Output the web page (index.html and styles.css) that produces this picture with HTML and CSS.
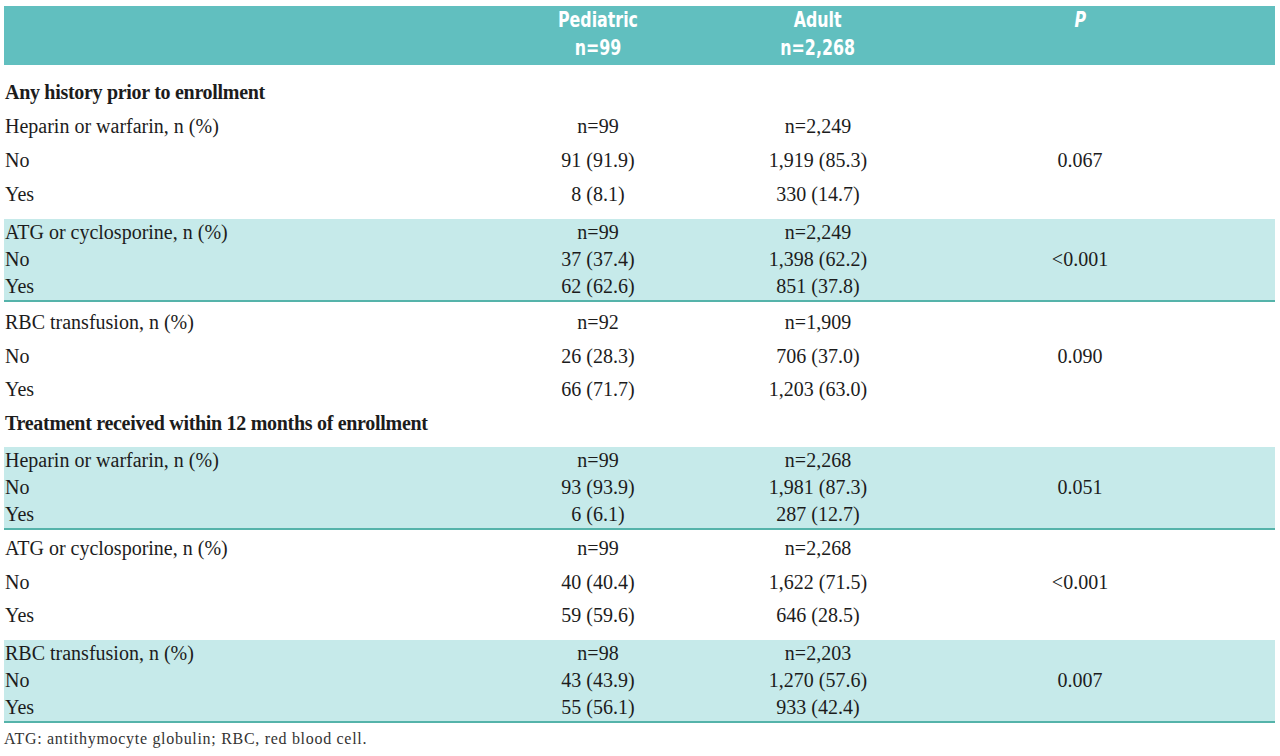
FILE: index.html
```html
<!DOCTYPE html>
<html lang="en">
<head>
<meta charset="utf-8">
<title>Treatment history table</title>
<link rel="stylesheet" href="styles.css">
</head>
<body>
<table class="tbl">
  <colgroup>
    <col class="c-label">
    <col class="c-ped">
    <col class="c-adult">
    <col class="c-p">
  </colgroup>
  <thead>
    <tr>
      <th></th>
      <th><span class="hd">Pediatric<br>n=99</span></th>
      <th><span class="hd">Adult<br>n=2,268</span></th>
      <th><span class="hd"><i>P</i></span></th>
    </tr>
  </thead>
  <tbody class="plain g1">
    <tr class="sec"><td colspan="4">Any history prior to enrollment</td></tr>
    <tr><td>Heparin or warfarin, n (%)</td><td>n=99</td><td>n=2,249</td><td></td></tr>
    <tr><td>No</td><td>91 (91.9)</td><td>1,919 (85.3)</td><td>0.067</td></tr>
    <tr><td>Yes</td><td>8 (8.1)</td><td>330 (14.7)</td><td></td></tr>
  </tbody>
  <tbody class="band">
    <tr><td>ATG or cyclosporine, n (%)</td><td>n=99</td><td>n=2,249</td><td></td></tr>
    <tr><td>No</td><td>37 (37.4)</td><td>1,398 (62.2)</td><td>&lt;0.001</td></tr>
    <tr><td>Yes</td><td>62 (62.6)</td><td>851 (37.8)</td><td></td></tr>
  </tbody>
  <tbody class="plain g2">
    <tr><td>RBC transfusion, n (%)</td><td>n=92</td><td>n=1,909</td><td></td></tr>
    <tr><td>No</td><td>26 (28.3)</td><td>706 (37.0)</td><td>0.090</td></tr>
    <tr><td>Yes</td><td>66 (71.7)</td><td>1,203 (63.0)</td><td></td></tr>
    <tr class="sec"><td colspan="4">Treatment received within 12 months of enrollment</td></tr>
  </tbody>
  <tbody class="band">
    <tr><td>Heparin or warfarin, n (%)</td><td>n=99</td><td>n=2,268</td><td></td></tr>
    <tr><td>No</td><td>93 (93.9)</td><td>1,981 (87.3)</td><td>0.051</td></tr>
    <tr><td>Yes</td><td>6 (6.1)</td><td>287 (12.7)</td><td></td></tr>
  </tbody>
  <tbody class="plain g3">
    <tr><td>ATG or cyclosporine, n (%)</td><td>n=99</td><td>n=2,268</td><td></td></tr>
    <tr><td>No</td><td>40 (40.4)</td><td>1,622 (71.5)</td><td>&lt;0.001</td></tr>
    <tr><td>Yes</td><td>59 (59.6)</td><td>646 (28.5)</td><td></td></tr>
  </tbody>
  <tbody class="band">
    <tr><td>RBC transfusion, n (%)</td><td>n=98</td><td>n=2,203</td><td></td></tr>
    <tr><td>No</td><td>43 (43.9)</td><td>1,270 (57.6)</td><td>0.007</td></tr>
    <tr><td>Yes</td><td>55 (56.1)</td><td>933 (42.4)</td><td></td></tr>
  </tbody>
</table>
<p class="note">ATG: antithymocyte globulin; RBC, red blood cell.</p>
</body>
</html>
```
FILE: styles.css
```css
html, body {
  margin: 0;
  padding: 0;
  background: #ffffff;
}

body {
  font-family: "Liberation Serif", "Times New Roman", serif;
  color: #1c1c1c;
}

.tbl {
  margin: 6px 0 0 4px;
  width: 1271px;
  border-collapse: separate;
  border-spacing: 0;
  table-layout: fixed;
  font-size: 20px;
}

.c-label { width: 441px; }
.c-ped { width: 306px; }
.c-adult { width: 134px; }
.c-p { width: 390px; }

.tbl th {
  background: #61bfbf;
  color: #ffffff;
  height: 59px;
  padding: 0;
  vertical-align: top;
  text-align: center;
  font-family: "DejaVu Sans Condensed", "Liberation Sans", sans-serif;
  font-weight: bold;
  font-size: 22px;
  line-height: 28px;
}

.hd {
  display: inline-block;
  transform: scaleX(0.8);
  transform-origin: center top;
}

.tbl td {
  padding: 0;
  white-space: nowrap;
  text-align: center;
  vertical-align: middle;
}

.tbl td:first-child {
  text-align: left;
  padding-left: 1px;
}

.plain td { line-height: 34px; }
.g2 td, .g3 td { line-height: 33.5px; }

.g1 tr:first-child td { padding-top: 10px; }
.g1 tr:last-child td { padding-bottom: 8px; }
.g2 tr:first-child td { padding-top: 4px; }
.g2 tr:last-child td { padding-bottom: 7px; }
.g3 tr:first-child td { padding-top: 2px; }
.g3 tr:last-child td { padding-bottom: 7.5px; }

.band td {
  background: #c6eaea;
  line-height: 27px;
}

.band tr:last-child td {
  border-bottom: 2px solid #55b3aa;
}

.sec td {
  font-weight: bold;
  letter-spacing: -0.3px;
}

.note {
  margin: 6px 0 0 4px;
  font-size: 16px;
  line-height: 20px;
  letter-spacing: 0.7px;
  color: #333333;
}
```
